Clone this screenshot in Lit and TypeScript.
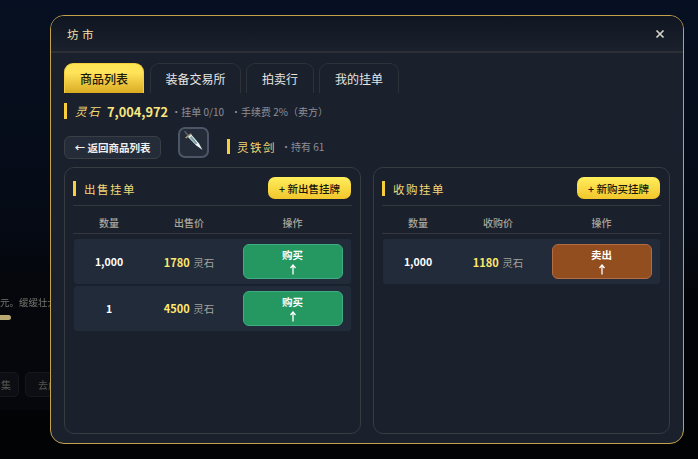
import { LitElement, html, css } from "lit";
import { customElement } from "lit/decorators.js";

@customElement("app-root")
export class AppRoot extends LitElement {
  static styles = css`
    :host { display: block; width: 698px; height: 459px; overflow: hidden; position: relative; box-sizing: border-box;
      background: linear-gradient(180deg, #071022 0%, #050a14 50%, #030407 65%, #020305 100%);
      font-family: "Noto Sans CJK SC", "Noto Sans", sans-serif; color: #e8e8e8; }
    * { box-sizing: border-box; }
    .ghost { position: absolute; left: 0; top: 270px; width: 120px; height: 140px; filter: blur(0.6px); }
    .ghost .panel-bg { position: absolute; inset: 0; background: #05070c; }
    .ghost .t { position: absolute; left: 0; top: 25px; font-size: 9.5px; color: #77766f; white-space: nowrap; }
    .ghost .bar { position: absolute; left: 0; top: 45px; width: 11px; height: 5px; border-radius: 0 3px 3px 0; background: #b9a873; }
    .ghost .b1 { position: absolute; left: 0; top: 102px; width: 19px; height: 25px; border: 1px solid #14171d; border-left: none; border-radius: 0 5px 5px 0; background: #0c0e13; color: #55554f; font-size: 10px; line-height: 23px; padding-left: 1px; }
    .ghost .b2 { position: absolute; left: 25px; top: 102px; width: 50px; height: 25px; border: 1px solid #14171d; border-radius: 5px; background: #0c0e13; color: #55554f; font-size: 10px; line-height: 23px; padding-left: 12px; }
    .wrap { position: relative; padding: 15px 14px 15px 50px; height: 459px; }
    .modal { height: 429px; border: 1px solid #c4a24c; border-radius: 14px; background: #1a202c; display: flex; flex-direction: column; overflow: hidden; }
    .head { height: 37px; flex: none; display: flex; align-items: center; justify-content: space-between; padding: 0 18px 0 16px;
      background: linear-gradient(180deg, #101522, #1a202c); border-bottom: 2px solid #2c2f33; }
    .title { font-size: 11.5px; letter-spacing: 3.5px; color: #f5e3a8; font-weight: 400; }
    .close { width: 10px; height: 10px; display: block; }
    .body { flex: 1; min-height: 0; padding: 10px 13px 9px; display: flex; flex-direction: column; }
    .tabs { display: flex; gap: 5px; height: 30px; flex: none; }
    .tab { height: 30px; padding: 0 15px; border: 1px solid #2e3238; border-bottom: none; border-radius: 9px 9px 0 0; font-size: 12px; line-height: 29px; color: #e6e6e2; background: #1a202c; }
    .tab.wide { padding: 0 14.5px; }
    .tab.on { background: linear-gradient(180deg, #ffe652 0%, #ffe35a 30%, #d9ab22 100%); border-color: #f3cf40; color: #1d1a0e; font-weight: 500; margin-right: 1px; }
    .info { display: flex; align-items: center; height: 16px; margin-top: 10px; flex: none; }
    .vbar { width: 3px; background: #f7cf3c; flex: none; }
    .info .vbar { height: 16px; margin-right: 8px; }
    .kai { color: #f0d878; font-size: 11.5px; letter-spacing: 1.5px; }
    .info .kai { font-style: italic; }
    .money { font-size: 12.8px; font-weight: 700; color: #f9e67e; margin-left: 6px; }
    .muted { font-size: 10px; color: #8d9097; }
    .info .m1 { margin-left: 3px; }
    .info .m2 { margin-left: 7px; }
    .sub { display: flex; align-items: flex-start; height: 40px; margin-top: 8px; flex: none; }
    .back { margin-top: 9px; width: 97px; height: 23px; border: 1px solid #3a3f45; border-radius: 6px; background: #242c3a; color: #f0f0ee; font-size: 10.5px; font-weight: 600; display: flex; align-items: center; justify-content: center; white-space: nowrap; }
    .icon { margin-left: 17px; width: 31px; height: 31px; border: 2px solid #4d5666; border-radius: 7px; background: #242c3a; display: block; flex: none; }
    .name { margin: 12px 0 0 18px; display: flex; align-items: center; height: 15px; }
    .name .vbar { height: 15px; margin-right: 7px; }
    .name .muted { margin-left: 5px; }
    .panels { display: grid; grid-template-columns: 297px 297px; gap: 12px; flex: 1; min-height: 0; }
    .panel { border: 1px solid #383c40; border-radius: 10px; padding: 9px 8px 0 8px; }
    .phead { height: 29px; display: flex; justify-content: space-between; align-items: flex-start; border-bottom: 1px solid #35383b; padding-right: 1px; }
    .ptitle { display: flex; align-items: center; height: 15px; margin-top: 4px; }
    .ptitle .vbar { height: 15px; margin-right: 8px; }
    .ptitle span { font-size: 11.5px; letter-spacing: 1.5px; color: #f0d878; }
    .add { width: 83px; height: 22px; border-radius: 7px; background: linear-gradient(180deg, #ffee5c, #f2c62c); color: #1b180c; font-size: 10.5px; font-weight: 500; display: flex; align-items: center; justify-content: center; white-space: nowrap; }
    .grid { display: grid; grid-template-columns: 70px 90px 117px; align-items: center; text-align: center; margin: 0 1px; }
    .thead { height: 28px; margin: 0; padding: 6px 1px 0; border-bottom: 1px solid #35383b; font-size: 10px; color: #a8a69d; font-weight: 500; }
    .row { height: 45px; margin-top: 1.5px; background: #222b39; border-radius: 3px; }
    .thead + .row { margin-top: 5px; }
    .qty { font-size: 10.5px; font-weight: 700; color: #fff; }
    .price { font-size: 10.5px; color: #a3a39e; }
    .price b { color: #ffe66f; font-size: 11px; font-weight: 700; margin-right: 1px; }
    .act { justify-self: center; width: 100px; height: 35px; border-radius: 6px; display: flex; flex-direction: column; align-items: center; justify-content: center; color: #fff; font-size: 10.5px; font-weight: 700; line-height: 13px; }
    .buy { background: #259862; border: 1px solid #3eae82; }
    .sell { background: #934e20; border: 1px solid #b56c42; }
    .arrow { display: block; width: 8px; height: 11px; margin-top: 3px; }
  `;

  private arrow() {
    return html`<svg class="arrow" viewBox="0 0 8 11"><path d="M4 10.5V1.5M1.5 4L4 1l2.5 3" fill="none" stroke="#fff" stroke-width="1.3"/></svg>`;
  }

  private row(qty: string, price: string, label: string, cls: string) {
    return html`<div class="grid row">
      <div class="qty">${qty}</div>
      <div class="price"><b>${price}</b> 灵石</div>
      <div class="act ${cls}"><span>${label}</span>${this.arrow()}</div>
    </div>`;
  }

  private panel(title: string, add: string, col: string, rows: unknown) {
    return html`<section class="panel">
      <div class="phead">
        <div class="ptitle"><i class="vbar"></i><span>${title}</span></div>
        <div class="add">+ ${add}</div>
      </div>
      <div class="grid thead"><div>数量</div><div>${col}</div><div>操作</div></div>
      ${rows}
    </section>`;
  }

  render() {
    return html`
      <div class="ghost">
        <div class="panel-bg"></div>
        <div class="t">元。缓缓壮大中</div>
        <div class="bar"></div>
        <div class="b1">集</div>
        <div class="b2">去虚</div>
      </div>
      <div class="wrap">
        <div class="modal">
          <div class="head">
            <div class="title">坊市</div>
            <svg class="close" viewBox="0 0 10 10"><path d="M1.5 1.5l7 7M8.5 1.5l-7 7" stroke="#d4d2ca" stroke-width="1.7" fill="none"/></svg>
          </div>
          <div class="body">
            <div class="tabs">
              <div class="tab on">商品列表</div>
              <div class="tab wide">装备交易所</div>
              <div class="tab">拍卖行</div>
              <div class="tab">我的挂单</div>
            </div>
            <div class="info">
              <i class="vbar"></i><span class="kai">灵石</span><span class="money">7,004,972</span>
              <span class="muted m1">·挂单 0/10</span><span class="muted m2">·手续费 2%（卖方）</span>
            </div>
            <div class="sub">
              <div class="back">← 返回商品列表</div>
              <svg class="icon" viewBox="0 0 27 27">
                <path d="M4 2.5l1.2-.8 3.6 4-1.4 1.2z" fill="#5d5a66"/>
                <path d="M5 8.5l5.8-4.3 1 1.1L6.2 9.6z" fill="#a89a78"/>
                <path d="M8 8l3.2-2.4L19 14.5l3.5 6.5-6.5-4.8z" fill="#eef6f6"/>
                <path d="M9.5 8.6l2-1.5 6 7.2-1.7 1.2z" fill="#7fa3a8"/>
              </svg>
              <div class="name"><i class="vbar"></i><span class="kai">灵铁剑</span><span class="muted">·持有 61</span></div>
            </div>
            <div class="panels">
              ${this.panel("出售挂单", "新出售挂牌", "出售价", html`${this.row("1,000", "1780", "购买", "buy")}${this.row("1", "4500", "购买", "buy")}`)}
              ${this.panel("收购挂单", "新购买挂牌", "收购价", this.row("1,000", "1180", "卖出", "sell"))}
            </div>
          </div>
        </div>
      </div>
    `;
  }
}
